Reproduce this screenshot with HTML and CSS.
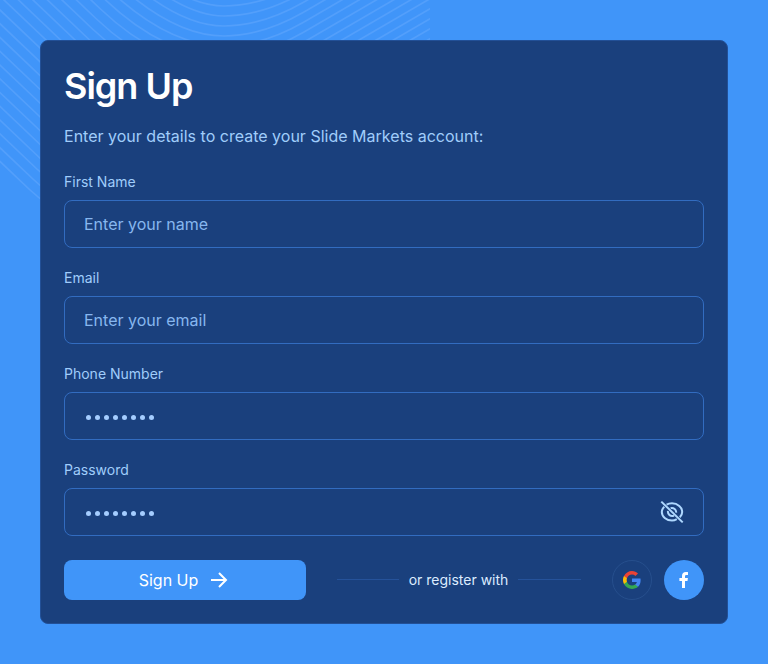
FILE: index.html
```html
<!DOCTYPE html>
<html lang="en">
<head>
<meta charset="utf-8">
<title>Sign Up</title>
<link rel="stylesheet" href="styles.css">
</head>
<body>
<svg class="waves" id="waves" viewBox="0 0 430 220" aria-hidden="true"></svg>
<main class="card">
  <h1>Sign Up</h1>
  <p class="intro">Enter your details to create your Slide Markets account:</p>
  <form class="form">
    <div class="field"><label>First Name</label><div class="box">Enter your name</div></div>
    <div class="field"><label>Email</label><div class="box">Enter your email</div></div>
    <div class="field"><label>Phone Number</label><div class="box"><span class="dots"><i></i><i></i><i></i><i></i><i></i><i></i><i></i><i></i></span></div></div>
    <div class="field"><label>Password</label><div class="box"><span class="dots"><i></i><i></i><i></i><i></i><i></i><i></i><i></i><i></i></span>
      <svg class="eye" viewBox="0 0 24 24" fill="none" stroke="currentColor" stroke-width="2"><path d="M6.600 4.700C8.200 3.700 10 3.300 12 3.300c5.800 0 10.200 4.200 10.200 8.700 0 1.900-.9 3.800-2.400 5.300M16.800 19.200c-1.500.9-3.100 1.400-4.800 1.400-5.800 0-10.200-4.200-10.200-8.600 0-1.900.9-3.800 2.500-5.300"/><path d="M10.600 8.100c3-.9 5.900 1.500 5.500 4.600M14 15.600c-3.200 1.500-6.600-1.200-6-4.600"/><path d="M1.300 1.600l21.400 20.800"/></svg>
    </div></div>
    <div class="actions">
      <button class="submit" type="button">Sign Up
        <svg viewBox="0 0 18 16" fill="none" stroke="currentColor" stroke-width="2"><path d="M1 8h15M9 1l7 7-7 7"/></svg>
      </button>
      <div class="or"><span>or register with</span></div>
      <div class="social">
        <a class="google" aria-label="Google"><svg viewBox="0 0 24 24"><path fill="#4285f4" d="M23.500 12.300c0-.8-.1-1.600-.2-2.300H12v4.500h6.500c-.3 1.500-1.100 2.800-2.400 3.600v3h3.900c2.300-2.100 3.500-5.200 3.500-8.800z"/><path fill="#34a853" d="M12 24c3.200 0 6-1.100 8-2.900l-3.900-3c-1.100.7-2.500 1.200-4.100 1.200-3.100 0-5.800-2.100-6.700-5H1.300v3.100C3.300 21.300 7.300 24 12 24z"/><path fill="#fbbc05" d="M5.300 14.300a7.200 7.200 0 010-4.600V6.600h-4a12 12 0 000 10.800z"/><path fill="#ea4335" d="M12 4.800c1.800 0 3.300.6 4.600 1.800L20 3.200C18 1.200 15.200 0 12 0 7.300 0 3.300 2.700 1.300 6.600l4 3.100c.9-2.800 3.600-4.900 6.700-4.900z"/></svg></a>
        <a class="facebook" aria-label="Facebook"><svg viewBox="0 0 10 16"><path fill="currentColor" d="M3 16V9H.4V6H3V4.100C3 1.500 4.500.1 6.800.1c1 0 1.900.1 2.200.1v2.700H7.500C6.200 2.900 6 3.600 6 4.500V6h2.900l-.4 3H6v7z"/></svg></a>
      </div>
    </div>
  </form>
</main>
<script src="waves.js"></script>
</body>
</html>
```
FILE: styles.css
```css
* { box-sizing: border-box; }
body { margin: 0; min-height: 664px; padding: 40px; background: #4095f9; font-family: Inter, "Liberation Sans", sans-serif; }
.waves { position: absolute; top: 0; left: 0; width: 430px; height: 220px; fill: none; stroke: #539ffb; stroke-width: 1.7; }
.card { position: relative; height: 584px; padding: 23px; border: 1px solid #225097; border-radius: 8px; background: #1a407d; }
h1 { margin: 0; font-size: 36px; line-height: 45px; font-weight: 600; letter-spacing: -1px; color: #fff; }
.intro { margin: 15px 0 0; font-size: 16px; line-height: 24px; letter-spacing: .01px; color: #a0cdfb; }
.form { margin-top: 24px; }
.field { height: 96px; }
label { display: block; height: 28px; font-size: 14px; line-height: 20px; color: #a0cdfb; }
.box { display: flex; align-items: center; justify-content: space-between; height: 48px; padding: 0 19px; border: 1px solid #326cc0; border-radius: 8px; font-size: 16px; color: #87b7ef; }
.dots { display: flex; gap: 4px; padding: 3px 0 0 2px; }
.dots i { width: 5px; height: 5px; border-radius: 50%; background: #a5cdff; }
.eye { width: 24px; height: 24px; color: #afd8ff; }
.actions { display: flex; align-items: center; height: 40px; margin-top: 4px; }
.submit { display: flex; align-items: center; justify-content: center; gap: 12px; width: 242px; height: 40px; padding: 0 3px 0 0; border: 0; border-radius: 8px; background: #4095f9; color: #fff; font: 16px Inter, "Liberation Sans", sans-serif; }
.submit svg { width: 18px; height: 16px; }
.or { display: flex; align-items: center; gap: 10px; width: 244px; height: 18px; margin: 0 0 1px 30.5px; font-size: 14px; line-height: 18px; color: #dcecff; white-space: nowrap; }
.or::before, .or::after { content: ""; flex: 1; height: 1px; background: #25529a; }
.social { display: flex; gap: 12px; margin-left: auto; }
.social a { display: flex; align-items: center; justify-content: center; width: 40px; height: 40px; border-radius: 50%; }
.google { border: 1px solid #264f8d; }
.google svg { width: 18px; height: 18px; }
.facebook { background: #4095f9; color: #fff; }
.facebook svg { width: 10px; height: 16px; }
```
FILE: waves.js
```js
const waves = document.getElementById("waves");
let d = "";
for (let i = -1; i <= 24; i++) {
  const y = 6 + 10 * i;
  const left = Math.min(120 - 14.5 * (i - 4) + y / 0.95, 180);
  d += `M${left - 360} ${y - 342}L${left - 60} ${y - 57}Q${left} ${y} 224 ${y}Q262 ${y} 304 ${y - 24}L500 ${y - 138}`;
}
const path = document.createElementNS("http://www.w3.org/2000/svg", "path");
path.setAttribute("d", d);
waves.append(path);
```
